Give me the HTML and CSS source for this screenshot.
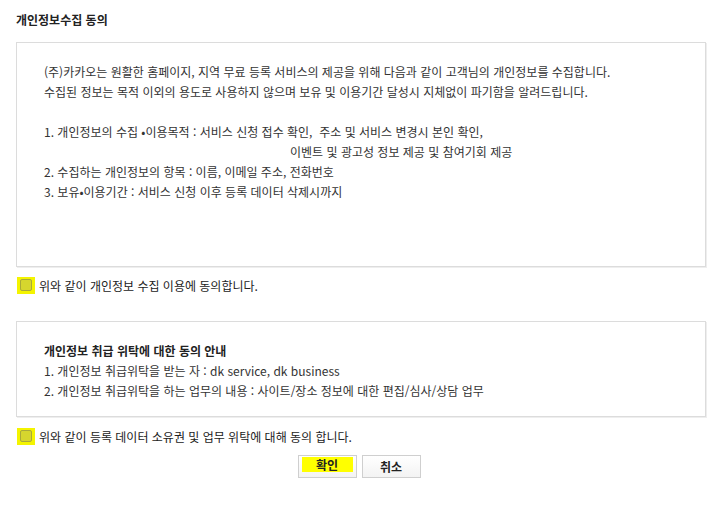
FILE: index.html
```html
<!DOCTYPE html>
<html lang="ko">
<head>
    <meta charset="UTF-8">
    <title>개인정보수집 동의</title>
    <link rel="stylesheet" href="styles.css">
</head>
<body>
    <div class="wrap">
        <h3 class="title">개인정보수집 동의</h3>

        <!-- 수집 안내 -->
        <div class="terms terms-main">
            <p>(주)카카오는 원활한 홈페이지, 지역 무료 등록 서비스의 제공을 위해 다음과 같이 고객님의 개인정보를 수집합니다.</p>
            <p>수집된 정보는 목적 이외의 용도로 사용하지 않으며 보유 및 이용기간 달성시 지체없이 파기함을 알려드립니다.</p>
            <p class="blank"></p>
            <p>1. 개인정보의 수집 •이용목적 : 서비스 신청 접수 확인,&nbsp; 주소 및 서비스 변경시 본인 확인,</p>
            <p class="indent">이벤트 및 광고성 정보 제공 및 참여기회 제공</p>
            <p>2. 수집하는 개인정보의 항목 : 이름, 이메일 주소, 전화번호</p>
            <p>3. 보유•이용기간 : 서비스 신청 이후 등록 데이터 삭제시까지</p>
        </div>

        <label class="agree agree-first">
            <span class="check"><span class="box"></span></span>
            위와 같이 개인정보 수집 이용에 동의합니다.
        </label>

        <!-- 위탁 안내 -->
        <div class="terms terms-sub">
            <p class="sub-title">개인정보 취급 위탁에 대한 동의 안내</p>
            <p>1. 개인정보 취급위탁을 받는 자 : dk service, dk business</p>
            <p>2. 개인정보 취급위탁을 하는 업무의 내용 : 사이트/장소 정보에 대한 편집/심사/상담 업무</p>
        </div>

        <label class="agree agree-second">
            <span class="check"><span class="box"></span></span>
            위와 같이 등록 데이터 소유권 및 업무 위탁에 대해 동의 합니다.
        </label>

        <div class="buttons">
            <button class="btn btn-ok"><span class="mark">확인</span></button>
            <button class="btn">취소</button>
        </div>
    </div>
</body>
</html>
```

FILE: styles.css
```css
/* Basic reset */
* {
    margin: 0;
    padding: 0;
    box-sizing: border-box;
}

body {
    font-family: "Noto Sans CJK KR", "Liberation Sans", sans-serif;
    font-size: 12px;
    color: #333;
    background: #fff;
}

.wrap {
    width: 720px;
    padding: 10px 14px 0 16px;
}

.title {
    font-size: 12px;
    font-weight: bold;
    line-height: 20px;
    color: #222;
}

/* Terms boxes */
.terms {
    border: 1px solid #dcdcdc;
    box-shadow: 1px 1px 0 #eee;
    padding: 19px 27px 0 27px;
    line-height: 20px;
}

.terms p {
    height: 20px;
    white-space: nowrap;
}

.terms-main {
    margin-top: 12px;
    height: 225px;
}

.terms .indent {
    padding-left: 246px;
}

.terms-sub {
    margin-top: 26px;
    height: 96px;
    padding-bottom: 15px;
}

.sub-title {
    font-weight: bold;
    color: #222;
}

/* Agree rows */
.agree {
    display: flex;
    align-items: center;
    height: 20px;
    gap: 4px;
    color: #222;
}

.agree-first {
    margin-top: 8px;
}

.agree-second {
    margin-top: 9px;
}

.check {
    display: flex;
    align-items: center;
    justify-content: center;
    width: 18px;
    height: 17px;
    background: #f4f400;
    margin-left: 1px;
}

.check .box {
    width: 12px;
    height: 12px;
    border: 1px solid #a9a93a;
    border-radius: 2px;
    background: #d6d62e;
}

/* Buttons */
.buttons {
    display: flex;
    justify-content: center;
    gap: 5px;
    margin-top: 9px;
    padding-right: 4px;
}

.btn {
    width: 59px;
    height: 23px;
    border: 1px solid #cfcfcf;
    background: linear-gradient(#fff, #f3f3f3);
    font-family: "Noto Sans CJK KR", sans-serif;
    font-size: 12px;
    font-weight: bold;
    color: #222;
    cursor: pointer;
}

.btn-ok {
    padding: 1px 3px 5px;
}

.btn-ok .mark {
    display: block;
    height: 15px;
    line-height: 15px;
    background: #ffff00;
}
```
